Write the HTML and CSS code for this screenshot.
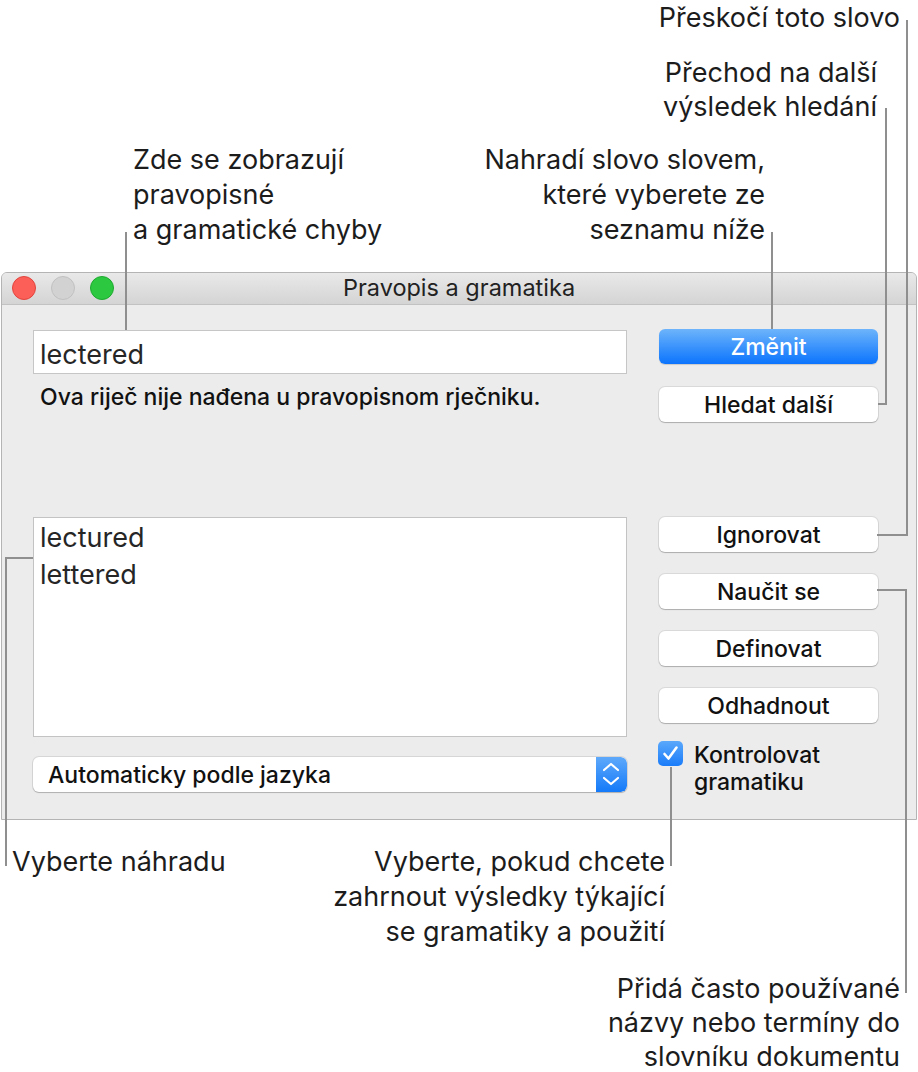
FILE: index.html
```html
<!DOCTYPE html>
<html lang="cs">
<head>
<meta charset="utf-8">
<title>Pravopis a gramatika</title>
<link rel="stylesheet" href="styles.css">
</head>
<body>
<div class="page">
  <div class="window">
    <div class="titlebar">
      <div class="lights">
        <span class="light red"></span>
        <span class="light gray"></span>
        <span class="light green"></span>
      </div>
      <div class="title">Pravopis a gramatika</div>
    </div>
    <div class="content">
      <div class="left">
        <div class="field">lectered</div>
        <div class="message">Ova riječ nije nađena u pravopisnom rječniku.</div>
        <div class="list">
          <div class="item">lectured</div>
          <div class="item">lettered</div>
        </div>
        <div class="popup">
          <span class="popup-label">Automaticky podle jazyka</span>
          <span class="stepper">
            <svg width="31" height="35" viewBox="0 0 31 35">
              <path d="M8 13 L15 7 L22 13" fill="none" stroke="#fff" stroke-width="2.2" stroke-linecap="round" stroke-linejoin="round"/>
              <path d="M8 21 L15 27 L22 21" fill="none" stroke="#fff" stroke-width="2.2" stroke-linecap="round" stroke-linejoin="round"/>
            </svg>
          </span>
        </div>
      </div>
      <div class="right">
        <button class="btn primary">Změnit</button>
        <button class="btn next">Hledat další</button>
        <button class="btn ignore">Ignorovat</button>
        <button class="btn small-gap">Naučit se</button>
        <button class="btn small-gap">Definovat</button>
        <button class="btn small-gap">Odhadnout</button>
        <div class="check">
          <span class="box">
            <svg width="25" height="25" viewBox="0 0 25 25">
              <path d="M6.5 13 L10.5 17.5 L18.5 6.5" fill="none" stroke="#fff" stroke-width="2.6" stroke-linecap="round" stroke-linejoin="round"/>
            </svg>
          </span>
          <span class="check-label">Kontrolovat<br>gramatiku</span>
        </div>
      </div>
    </div>
  </div>

  <div class="callout right-al c-skip"><span>Přeskočí toto slovo</span></div>
  <div class="callout right-al c-next"><span>Přechod na další</span><span>výsledek hledání</span></div>
  <div class="callout c-errors"><span>Zde se zobrazují</span><span>pravopisné</span><span>a gramatické chyby</span></div>
  <div class="callout right-al c-replace"><span>Nahradí slovo slovem,</span><span>které vyberete ze</span><span>seznamu níže</span></div>
  <div class="callout c-choose"><span>Vyberte náhradu</span></div>
  <div class="callout right-al c-grammar"><span>Vyberte, pokud chcete</span><span>zahrnout výsledky týkající</span><span>se gramatiky a použití</span></div>
  <div class="callout right-al c-learn"><span>Přidá často používané</span><span>názvy nebo termíny do</span><span>slovníku dokumentu</span></div>

  <svg class="leaders" width="918" height="1072" viewBox="0 0 918 1072">
    <g fill="none" stroke="#8f8f8f" stroke-width="2">
      <polyline points="126,232 126,330"/>
      <polyline points="772,232 772,329"/>
      <polyline points="886,108 886,404 878,404"/>
      <polyline points="907,20 907,535 877,535"/>
      <polyline points="877,590 906,590 906,993"/>
      <polyline points="671,767 671,866"/>
      <polyline points="33,558 6,558 6,866"/>
    </g>
  </svg>
</div>
</body>
</html>
```

FILE: styles.css
```css
* { box-sizing: border-box; }

html, body {
  margin: 0;
  padding: 0;
  background: #ffffff;
}

body {
  font-family: "Inter", "Liberation Sans", sans-serif;
  color: #1c1c1c;
}

.page {
  position: relative;
  width: 918px;
  height: 1072px;
  overflow: hidden;
  padding-top: 272px;
  padding-left: 1px;
}

/* ---------- window ---------- */
.window {
  width: 916px;
  height: 548px;
  border: 1px solid #b4b4b4;
  border-radius: 6px 6px 0 0;
  background: #ececec;
  display: flex;
  flex-direction: column;
  overflow: hidden;
}

.titlebar {
  position: relative;
  height: 32px;
  flex: none;
  background: linear-gradient(#e9e9e9, #d4d4d4);
  border-bottom: 1px solid #c2c2c2;
  display: flex;
  align-items: center;
  justify-content: center;
}

.lights {
  position: absolute;
  left: 10px;
  top: 3px;
  display: flex;
  gap: 15px;
}

.light {
  width: 24px;
  height: 24px;
  border-radius: 50%;
  display: block;
}
.light.red { background: #fc5f57; border: 1px solid #e0453e; }
.light.gray { background: #d2d2d2; border: 1px solid #c0c0c0; }
.light.green { background: #2bc840; border: 1px solid #1fa930; }

.title {
  font-size: 23.5px;
  color: #222;
  font-weight: 400;
  margin-top: -2px;
}

.content {
  flex: 1;
  display: flex;
  gap: 32px;
  padding: 24px 0 0 31px;
}

.left {
  width: 594px;
  display: flex;
  flex-direction: column;
}

.field {
  margin-top: 1px;
  height: 44px;
  background: #fff;
  border: 1px solid #c6c6c6;
  font-size: 27px;
  line-height: 36px;
  padding: 6px 0 0 6px;
  color: #262626;
}

.message {
  margin-top: 10px;
  font-size: 23px;
  line-height: 26px;
  font-weight: 500;
  color: #111;
  padding-left: 7px;
}

.list {
  margin-top: 107px;
  height: 220px;
  background: #fff;
  border: 1px solid #c3c3c3;
  padding: 2px 0 0 6px;
}

.item {
  font-size: 27px;
  line-height: 36.5px;
  color: #262626;
}

.popup {
  margin-top: 20px;
  height: 35px;
  background: #fff;
  border-radius: 6px;
  box-shadow: 0 0 0 1px rgba(0,0,0,0.09), 0 1px 1px rgba(0,0,0,0.18);
  display: flex;
  align-items: center;
  justify-content: space-between;
  padding-left: 15px;
  overflow: hidden;
}

.popup-label {
  font-size: 23px;
  font-weight: 500;
  color: #111;
}

.stepper {
  width: 31px;
  height: 35px;
  display: block;
  background: linear-gradient(#5ea9fb, #147af9);
  border-radius: 0 6px 6px 0;
}
.stepper svg { display: block; }

.right {
  width: 219px;
  display: flex;
  flex-direction: column;
  align-items: stretch;
}

.btn {
  height: 35px;
  border: none;
  border-radius: 6px;
  background: #ffffff;
  box-shadow: 0 0 0 1px rgba(0,0,0,0.08), 0 1px 1px rgba(0,0,0,0.2);
  font-family: "Inter", "Liberation Sans", sans-serif;
  font-size: 23px;
  font-weight: 500;
  color: #111;
  padding: 0;
  text-align: center;
}

.btn.primary {
  background: linear-gradient(#6db4fb, #0b74fd);
  color: #fff;
  box-shadow: 0 1px 1px rgba(0,0,0,0.15);
}

.btn.next { margin-top: 23px; }
.btn.ignore { margin-top: 95px; }
.btn.small-gap { margin-top: 22px; }

.check {
  margin-top: 18px;
  margin-left: -1px;
  display: flex;
  align-items: flex-start;
  gap: 11px;
}

.box {
  width: 25px;
  height: 25px;
  flex: none;
  border-radius: 5px;
  background: linear-gradient(#5aa8fb, #1a7cf9);
  display: block;
}
.box svg { display: block; }

.check-label {
  font-size: 23px;
  line-height: 27px;
  font-weight: 500;
  color: #111;
  margin-top: 1px;
}

/* ---------- callouts ---------- */
.callout {
  position: absolute;
  display: flex;
  flex-direction: column;
  align-items: flex-start;
  gap: 6px;
  font-size: 27px;
  line-height: 28px;
  color: #1c1c1c;
  font-weight: 400;
  white-space: nowrap;
}
.callout.right-al { align-items: flex-end; text-align: right; }

.c-skip { right: 18px; top: 4px; }
.c-next { right: 41px; top: 59px; }
.c-errors { left: 133px; top: 146px; gap: 7px; }
.c-replace { right: 153px; top: 146px; gap: 7px; }
.c-choose { left: 12px; top: 848px; }
.c-grammar { right: 253px; top: 848px; gap: 7px; }
.c-learn { right: 18px; top: 976px; line-height: 26px; gap: 8px; }

.leaders {
  position: absolute;
  left: 0;
  top: 0;
  pointer-events: none;
}
```
